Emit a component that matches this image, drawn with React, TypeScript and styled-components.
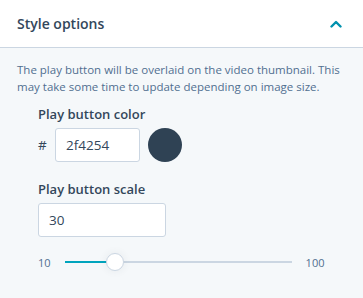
import React from "react";
import styled, { createGlobalStyle } from "styled-components";

const Global = createGlobalStyle`
  html, body { margin: 0; padding: 0; background: #f5f8fa; }
  * { box-sizing: border-box; }
  body { font-family: "Open Sans", "Noto Sans", sans-serif; }
`;

const Panel = styled.div`
  width: 363px;
  height: 298px;
  background: #f5f8fa;
  display: flex;
  flex-direction: column;
`;

const Header = styled.div`
  height: 48px;
  background: #fff;
  border-bottom: 1px solid #cbd6e2;
  display: flex;
  align-items: center;
  justify-content: space-between;
  padding: 0 21px 0 17px;
`;

const Title = styled.div`
  font-size: 14px;
  font-weight: 600;
  color: #33475b;
`;

const Body = styled.div`
  padding: 13px 17px 0 17px;
  display: flex;
  flex-direction: column;
`;

const Description = styled.p`
  margin: 0;
  font-size: 11.5px;
  line-height: 17px;
  color: #516f90;
`;

const Field = styled.div<{ $top: number }>`
  padding-left: 38px;
  display: flex;
  flex-direction: column;
  margin-top: ${(p) => p.$top}px;
`;

const Label = styled.div`
  font-size: 13px;
  font-weight: 600;
  color: #33475b;
  line-height: 18px;
`;

const InputRow = styled.div`
  display: flex;
  align-items: center;
  margin-top: 5px;
`;

const Hash = styled.span`
  font-size: 13.5px;
  color: #33475b;
  width: 17px;
`;

const Input = styled.div<{ $w: number }>`
  width: ${(p) => p.$w}px;
  height: 34px;
  background: #fff;
  border: 1px solid #cbd6e2;
  border-radius: 3px;
  display: flex;
  align-items: center;
  padding-left: 10px;
  font-size: 13.5px;
  color: #33475b;
`;

const Swatch = styled.div<{ $c: string }>`
  width: 34px;
  height: 34px;
  border-radius: 50%;
  background: ${(p) => p.$c};
  margin-left: 8px;
`;

const SliderRow = styled.div`
  display: flex;
  align-items: center;
  margin-top: 16px;
  padding-left: 38px;
  height: 18px;
`;

const Tick = styled.span`
  font-size: 11px;
  color: #516f90;
`;

const Track = styled.div`
  position: relative;
  width: 227px;
  height: 2px;
  background: #cbd6e2;
  margin: 0 14px 0 14px;
`;

const Fill = styled.div`
  position: absolute;
  left: 0;
  top: 0;
  height: 2px;
  background: #00a4bd;
`;

const Thumb = styled.div`
  position: absolute;
  top: -8px;
  width: 18px;
  height: 18px;
  margin-left: -9px;
  border-radius: 50%;
  background: #fff;
  border: 1px solid #cbd6e2;
  box-shadow: 0 0 8px rgba(45, 62, 80, 0.08);
`;

const Chevron = () => (
  <svg width="12" height="8" viewBox="0 0 12 8" fill="none">
    <path d="M1.5 6.5 L6 2 L10.5 6.5" stroke="#0091ae" strokeWidth="2.4" strokeLinecap="round" strokeLinejoin="round" />
  </svg>
);

export default function App() {
  const pct = ((30 - 10) / 90) * 100;
  return (
    <>
      <Global />
      <Panel>
        <Header>
          <Title>Style options</Title>
          <Chevron />
        </Header>
        <Body>
          <Description>
            The play button will be overlaid on the video thumbnail. This may take some time to update depending on image size.
          </Description>
        </Body>
        <Field $top={10}>
          <Label>Play button color</Label>
          <InputRow>
            <Hash>#</Hash>
            <Input $w={85}>2f4254</Input>
            <Swatch $c="#2f4254" />
          </InputRow>
        </Field>
        <Field $top={18}>
          <Label>Play button scale</Label>
          <InputRow>
            <Input $w={128}>30</Input>
          </InputRow>
        </Field>
        <SliderRow>
          <Tick>10</Tick>
          <Track>
            <Fill style={{ width: `${pct}%` }} />
            <Thumb style={{ left: `${pct}%` }} />
          </Track>
          <Tick>100</Tick>
        </SliderRow>
      </Panel>
    </>
  );
}
